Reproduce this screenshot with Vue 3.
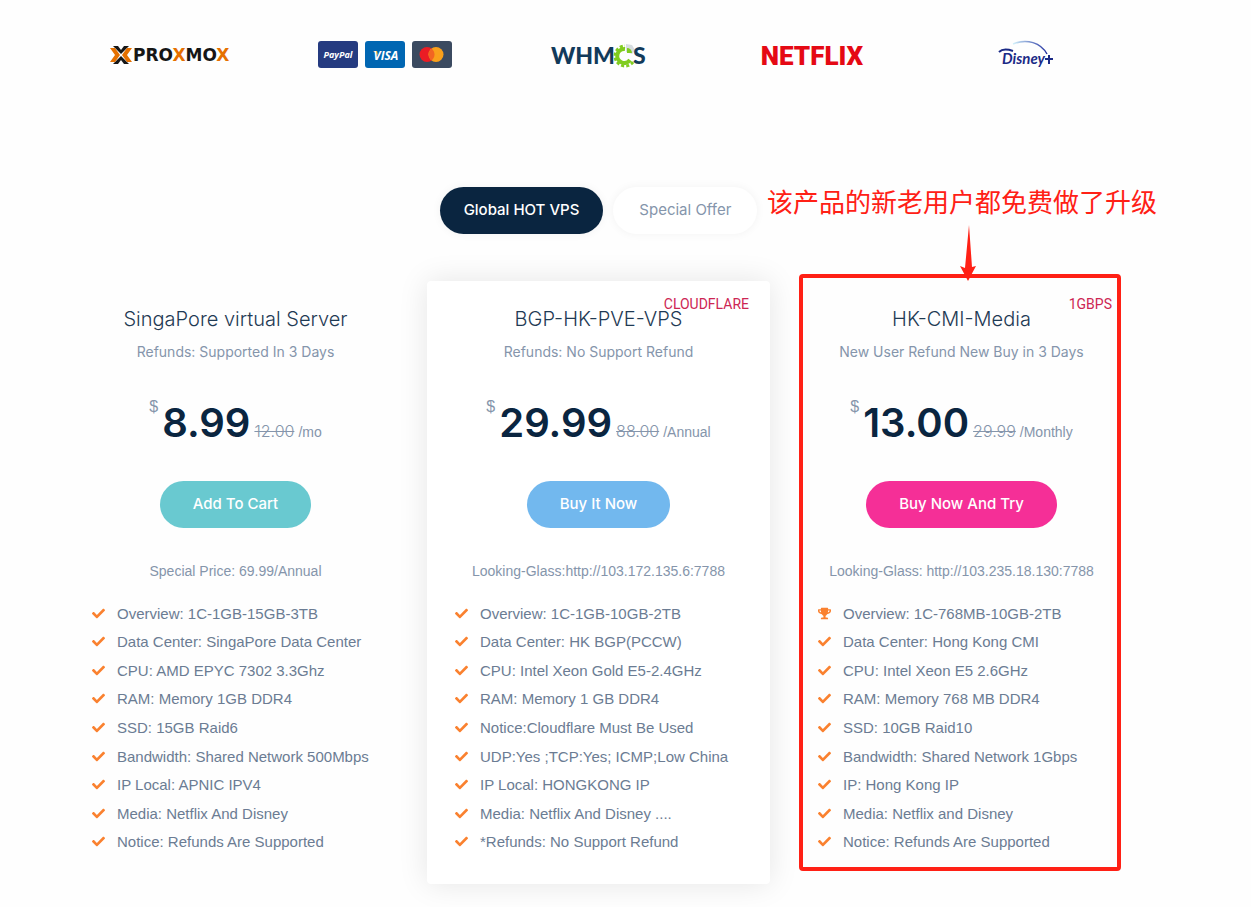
<template>
  <main class="page">
    <!-- Partner logos -->
    <section class="partners" aria-label="Partners">
      <div class="partner">
        <svg width="124" height="30" viewBox="0 0 124 30" role="img" aria-label="Proxmox">
          <path d="M4 6h5l3 4 3-4h5l-8 8z" fill="#161616" />
          <path d="M4 24h5l3-4 3 4h5l-8-8z" fill="#161616" />
          <path d="M1 8h5l5 7-5 7H1l5-7z" fill="#e57000" />
          <path d="M23 8h-5l-5 7 5 7h5l-5-7z" fill="#e57000" />
          <text x="24" y="21" class="proxmox">PRO<tspan fill="#e57000">X</tspan>MO<tspan fill="#e57000">X</tspan></text>
        </svg>
      </div>
      <div class="partner">
        <svg width="134" height="28" viewBox="0 0 134 28" role="img" aria-label="PayPal, Visa, Mastercard">
          <rect width="40" height="27" rx="3" fill="#253b80" />
          <text x="20" y="17" class="paypal">PayPal</text>
          <rect x="47" width="40" height="27" rx="3" fill="#0066b2" />
          <path d="M55 10h4l1 4z" fill="#f0a830" />
          <text x="68" y="19" class="visa">VISA</text>
          <rect x="94" width="40" height="27" rx="3" fill="#3b4a60" />
          <circle cx="109" cy="13.500" r="7.500" fill="#eb1c24" />
          <circle cx="118" cy="13.500" r="7.500" fill="#f9a01b" />
          <path d="M113.500 7.500a7.500 7.500 0 0 1 0 12a7.500 7.500 0 0 1 0-12z" fill="#f26522" />
        </svg>
      </div>
      <div class="partner">
        <svg width="98" height="30" viewBox="0 0 98 30" role="img" aria-label="WHMCS">
          <text x="2" y="24" class="whmcs">WHM</text>
          <path d="M81 20a7 7 0 1 1-5-11" fill="none" stroke="#80cc1f" stroke-width="4" />
          <path d="M84 22a10 10 0 1 1-8-16" fill="none" stroke="#80cc1f" stroke-width="3" stroke-dasharray="3 2" />
          <path d="M77 4l6 1 3 5-3 4-6-2z" fill="#d7dde0" />
          <path d="M78 8v5h5a5 5 0 0 0-5-5z" fill="#80cc1f" />
          <text x="84" y="24" class="whmcs">S</text>
        </svg>
      </div>
      <div class="partner">
        <svg width="110" height="36" viewBox="0 0 110 36" role="img" aria-label="Netflix">
          <text x="55" y="28" class="netflix">NETFLIX</text>
        </svg>
      </div>
      <div class="partner">
        <svg width="56" height="30" viewBox="0 0 56 30" role="img" aria-label="Disney+">
          <defs>
            <linearGradient id="arc" x1="0" x2="1">
              <stop offset="0" stop-color="#d4f2fb" />
              <stop offset="1" stop-color="#2030a0" />
            </linearGradient>
          </defs>
          <path d="M15 4C29-2 43 3 49 14" fill="none" stroke="url(#arc)" stroke-width="1.500" />
          <path d="M1 12C4 9 9 9 15 11" fill="none" stroke="#1b2a86" stroke-width="2" />
          <text x="4" y="24" class="disney">Disney</text>
          <path d="M47 19h8M51 15v9" stroke="#1b2a86" stroke-width="2" />
        </svg>
      </div>
    </section>

    <!-- Plan tabs -->
    <nav class="tabs">
      <button
        v-for="tab in tabs"
        :key="tab"
        type="button"
        class="tab"
        :class="{ active: tab === activeTab }"
        @click="activeTab = tab"
      >
        {{ tab }}
      </button>
    </nav>

    <!-- Plans -->
    <section class="plans">
      <article
        v-for="plan in plans"
        :key="plan.name"
        class="plan"
        :class="{ featured: plan.featured }"
      >
        <span v-if="plan.tag" class="plan-tag">{{ plan.tag }}</span>
        <h3 class="plan-name">{{ plan.name }}</h3>
        <p class="plan-refund">{{ plan.refund }}</p>

        <div class="price">
          <span class="currency">$</span>
          <span class="amount">{{ plan.price }}</span>
          <del class="old-price">{{ plan.oldPrice }}</del>
          <span class="period">/{{ plan.period }}</span>
        </div>

        <button type="button" class="buy" :class="plan.color">{{ plan.action }}</button>
        <p class="plan-note">{{ plan.note }}</p>

        <ul class="features">
          <li v-for="(feature, index) in plan.features" :key="feature">
            <svg v-if="plan.trophy && index === 0" class="icon" viewBox="0 0 576 512">
              <path
                d="M552 64H448V24c0-13.300-10.700-24-24-24H152c-13.300 0-24 10.700-24 24v40H24C10.700 64 0 74.700 0 88v56c0 35.700 22.500 72.400 61.900 100.700 31.500 22.700 69.800 37.100 110 41.700C203.300 338.500 240 360 240 360v72h-48c-35.300 0-64 20.700-64 56v12c0 6.600 5.400 12 12 12h296c6.600 0 12-5.400 12-12v-12c0-35.300-28.700-56-64-56h-48v-72s36.700-21.500 68.100-73.600c40.300-4.600 78.600-19 110-41.700 39.300-28.300 61.900-65 61.900-100.700V88c0-13.300-10.700-24-24-24zM99.300 192.800C74.900 175.200 64 155.600 64 144v-16h64.200c1 32.600 5.800 61.200 12.800 86.200-15.100-5.200-29.200-12.400-41.700-21.400zM512 144c0 16.100-17.700 36.100-35.300 48.800-12.500 9-26.700 16.200-41.800 21.400 7-25 11.800-53.600 12.800-86.200H512v16z"
              />
            </svg>
            <svg v-else class="icon" viewBox="0 0 512 512">
              <path
                d="M173.900 439.400l-166.400-166.400c-10-10-10-26.200 0-36.200l36.200-36.200c10-10 26.200-10 36.200 0L192 312.700 432.100 72.600c10-10 26.200-10 36.200 0l36.200 36.200c10 10 10 26.200 0 36.200l-294.400 294.400c-10 10-26.200 10-36.200 0z"
              />
            </svg>
            <span>{{ feature }}</span>
          </li>
        </ul>

        <div v-if="plan.callout" class="callout">
          <p class="callout-text">{{ plan.callout }}</p>
          <svg class="callout-arrow" width="16" height="56" viewBox="0 0 16 56">
            <path d="M9 0l3 42 4-1-8 15-8-15 5 2z" fill="#ff2015" />
          </svg>
        </div>
      </article>
    </section>
  </main>
</template>

<script setup>
import { ref } from 'vue'

const tabs = ['Global HOT VPS', 'Special Offer']
const activeTab = ref('Global HOT VPS')

const plans = [
  {
    name: 'SingaPore virtual Server',
    refund: 'Refunds: Supported In 3 Days',
    price: '8.99',
    oldPrice: '12.00',
    period: 'mo',
    action: 'Add To Cart',
    color: 'teal',
    note: 'Special Price: 69.99/Annual',
    features: [
      'Overview: 1C-1GB-15GB-3TB',
      'Data Center: SingaPore Data Center',
      'CPU: AMD EPYC 7302 3.3Ghz',
      'RAM: Memory 1GB DDR4',
      'SSD: 15GB Raid6',
      'Bandwidth: Shared Network 500Mbps',
      'IP Local: APNIC IPV4',
      'Media: Netflix And Disney',
      'Notice: Refunds Are Supported'
    ]
  },
  {
    name: 'BGP-HK-PVE-VPS',
    tag: 'CLOUDFLARE',
    featured: true,
    refund: 'Refunds: No Support Refund',
    price: '29.99',
    oldPrice: '88.00',
    period: 'Annual',
    action: 'Buy It Now',
    color: 'blue',
    note: 'Looking-Glass:http://103.172.135.6:7788',
    features: [
      'Overview: 1C-1GB-10GB-2TB',
      'Data Center: HK BGP(PCCW)',
      'CPU: Intel Xeon Gold E5-2.4GHz',
      'RAM: Memory 1 GB DDR4',
      'Notice:Cloudflare Must Be Used',
      'UDP:Yes ;TCP:Yes; ICMP;Low China',
      'IP Local: HONGKONG IP',
      'Media: Netflix And Disney ....',
      '*Refunds: No Support Refund'
    ]
  },
  {
    name: 'HK-CMI-Media',
    tag: '1GBPS',
    refund: 'New User Refund New Buy in 3 Days',
    price: '13.00',
    oldPrice: '29.99',
    period: 'Monthly',
    action: 'Buy Now And Try',
    color: 'pink',
    note: 'Looking-Glass: http://103.235.18.130:7788',
    trophy: true,
    callout: '该产品的新老用户都免费做了升级',
    features: [
      'Overview: 1C-768MB-10GB-2TB',
      'Data Center: Hong Kong CMI',
      'CPU: Intel Xeon E5 2.6GHz',
      'RAM: Memory 768 MB DDR4',
      'SSD: 10GB Raid10',
      'Bandwidth: Shared Network 1Gbps',
      'IP: Hong Kong IP',
      'Media: Netflix and Disney',
      'Notice: Refunds Are Supported'
    ]
  }
]
</script>

<style>
body {
  background: #fefefe;
}
</style>

<style scoped>
.page {
  padding: 40px 118px 23px 64px;
  font-family: "Liberation Sans", Arial, sans-serif;
  color: #8595ab;
}

.partners {
  display: grid;
  grid-template-columns: repeat(5, 1fr);
  margin-bottom: 117px;
}

.partner {
  display: flex;
  align-items: center;
  justify-content: center;
  height: 30px;
}

.partner svg {
  flex: none;
}

.proxmox {
  font: bold 17px "DejaVu Sans", sans-serif;
  fill: #161616;
}

.paypal {
  font: italic bold 9px "Open Sans", sans-serif;
  text-anchor: middle;
  fill: #fff;
}

.visa {
  font: italic bold 12px "Open Sans", sans-serif;
  text-anchor: middle;
  fill: #fff;
}

.whmcs {
  font: 900 23px Lato, sans-serif;
  fill: #123a5a;
}

.netflix {
  font: 900 26px Roboto, sans-serif;
  text-anchor: middle;
  fill: #e50914;
}

.disney {
  font: italic bold 15px Lato, sans-serif;
  fill: #1b2a86;
}

.tabs {
  display: flex;
  justify-content: center;
  gap: 10px;
  margin-bottom: 47px;
}

.tab {
  min-width: 144px;
  height: 47px;
  padding: 0 24px 2px;
  border: none;
  border-radius: 24px;
  background: #fff;
  color: #8595ab;
  font: 400 15px Inter, sans-serif;
  box-shadow: 0 0 10px rgba(0, 0, 0, 0.05);
  cursor: pointer;
}

.tab.active {
  background: #0a2540;
  color: #fff;
  font-weight: 500;
}

.plans {
  display: grid;
  grid-template-columns: repeat(3, 1fr);
  gap: 20px;
}

.plan {
  position: relative;
  display: flex;
  flex-direction: column;
  align-items: center;
  padding: 24px 0 28px;
  border-radius: 4px;
}

.plan.featured {
  background: #fff;
  box-shadow: 0 0 30px rgba(0, 0, 0, 0.1);
}

.plan-tag {
  position: absolute;
  top: 13px;
  right: 21px;
  font: 400 14px/20px Roboto, sans-serif;
  color: #cd2653;
}

.plan-name {
  margin: 0 0 8px;
  font: 300 20px/28px Inter, sans-serif;
  color: #1f3a54;
}

.plan-refund {
  margin: 0 0 32px;
  font: 400 14px/22px Inter, sans-serif;
}

.price {
  display: flex;
  align-items: baseline;
  height: 56px;
  margin-bottom: 30px;
  line-height: 56px;
}

.currency {
  align-self: flex-start;
  margin-right: 4px;
  font-size: 16px;
  line-height: 24px;
}

.amount {
  margin-right: 4px;
  font-family: Inter, sans-serif;
  font-size: 40px;
  font-weight: 600;
  color: #0a2540;
}

.old-price {
  margin-right: 4px;
  font-family: Inter, sans-serif;
  font-size: 16px;
  font-weight: 300;
}

.period {
  font-size: 14px;
}

.buy {
  height: 47px;
  margin-bottom: 32px;
  padding: 0 33px 2px;
  border: none;
  border-radius: 24px;
  color: #fff;
  font: 500 15px Inter, sans-serif;
  cursor: pointer;
}

.buy.teal {
  background: #69c9d0;
}

.buy.blue {
  background: #72b8ee;
}

.buy.pink {
  background: #f52f97;
}

.plan-note {
  margin: 0 0 17px;
  font-size: 14px;
  line-height: 22px;
}

.features {
  display: grid;
  grid-auto-rows: 1fr;
  align-self: stretch;
  min-height: 257px;
  margin: 0;
  padding: 0 0 0 28px;
  list-style: none;
  font-size: 15px;
  color: #6b7c93;
}

.features li {
  display: flex;
  align-items: center;
  gap: 12px;
}

.icon {
  flex: none;
  width: 13px;
  height: 13px;
  fill: #fa812f;
}

/* Red frame drawn over the plan */
.callout {
  position: absolute;
  top: -7px;
  right: 12px;
  bottom: 13px;
  left: 9px;
  border: 4px solid #ff2015;
  border-radius: 4px;
  pointer-events: none;
}

.callout-text {
  position: absolute;
  top: -93px;
  left: -36px;
  margin: 0;
  font: 26px/32px "Noto Sans CJK SC", sans-serif;
  white-space: nowrap;
  color: #ff2015;
}

.callout-arrow {
  position: absolute;
  top: -53px;
  left: 157px;
}
</style>
